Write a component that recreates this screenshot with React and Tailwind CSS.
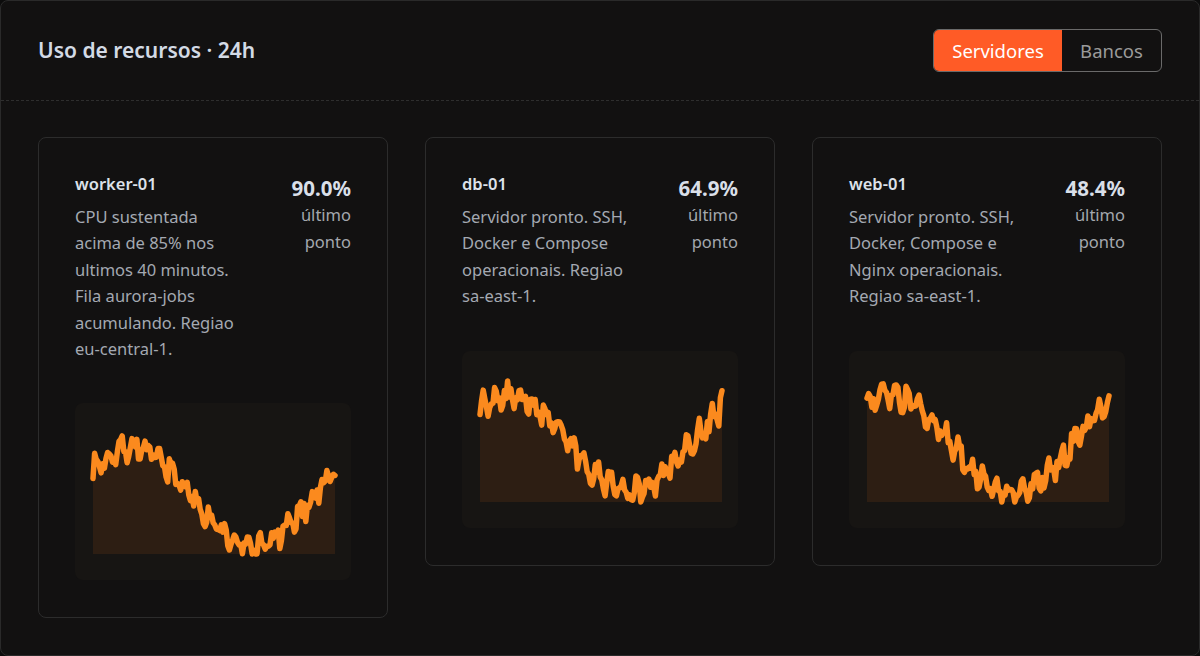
import { useMemo } from 'react';

const FONT = { fontFamily: '"Noto Sans", "Open Sans", sans-serif' };

const servers = [
  {
    name: 'worker-01',
    value: '90.0%',
    text: 'CPU sustentada acima de 85% nos ultimos 40 minutos. Fila aurora-jobs acumulando. Regiao eu-central-1.',
    seed: 7,
    shape: { mid: 0.47, amp: 0.41, period: 1.0, peak: 0.16, tail: 0 },
  },
  {
    name: 'db-01',
    value: '64.9%',
    text: 'Servidor pronto. SSH, Docker e Compose operacionais. Regiao sa-east-1.',
    seed: 19,
    shape: { mid: 0.48, amp: 0.4, period: 1.0, peak: 0.12, tail: 0.14 },
  },
  {
    name: 'web-01',
    value: '48.4%',
    text: 'Servidor pronto. SSH, Docker, Compose e Nginx operacionais. Regiao sa-east-1.',
    seed: 31,
    shape: { mid: 0.48, amp: 0.4, period: 1.0, peak: 0.1, tail: 0.1 },
  },
];

// small seeded rng so every render draws the same series
function rng(seed) {
  let a = seed >>> 0;
  return () => {
    a = (a + 0x6d2b79f5) >>> 0;
    let t = a;
    t = Math.imul(t ^ (t >>> 15), t | 1);
    t ^= t + Math.imul(t ^ (t >>> 7), t | 61);
    return ((t ^ (t >>> 14)) >>> 0) / 4294967296;
  };
}

function buildSeries(seed, { mid, amp, period, peak, tail }, n = 150) {
  const rand = rng(seed);
  const pts = [];
  for (let i = 0; i < n; i++) {
    const t = i / (n - 1);
    let v = mid + amp * Math.cos((2 * Math.PI * (t - peak)) / period);
    v += (rand() - 0.5) * 0.14 + Math.sin(i * 0.8 + rand() * 0.6) * 0.065;
    if (i >= n - 2) v += tail;
    pts.push(Math.max(0, Math.min(1, v)));
  }
  return pts;
}

function Sparkline({ seed, shape }) {
  const W = 242;
  const H = 135;
  const { line, area } = useMemo(() => {
    const data = buildSeries(seed, shape);
    const top = 14;
    const coords = data.map((v, i) => [(i / (data.length - 1)) * W, H - v * (H - top)]);
    const l = coords.map(([x, y], i) => `${i ? 'L' : 'M'}${x.toFixed(1)},${y.toFixed(1)}`).join(' ');
    return { line: l, area: `${l} L${W},${H} L0,${H} Z` };
  }, [seed, shape]);

  return (
    <svg width={W} height={H} viewBox={`0 0 ${W} ${H}`} className="block overflow-visible">
      <path d={area} fill="#f97316" fillOpacity="0.1" />
      <path d={line} fill="none" stroke="#fb8a1e" strokeWidth="5.5" strokeLinejoin="round" strokeLinecap="round" />
    </svg>
  );
}

function ServerCard({ server }) {
  return (
    <div className="w-[350px] rounded-lg border border-[#2c2c2c] bg-[#121111] px-9 pt-9 pb-[37px]">
      <div className="flex justify-between">
        <div className="w-[170px]">
          <div className="text-[16.5px] font-semibold leading-5 text-[#dde2ea]">{server.name}</div>
          <p className="mt-[10px] text-[16.5px] leading-[26.4px] text-[#a4a9b2]">{server.text}</p>
        </div>
        <div className="w-[80px] pt-[2px] text-right">
          <div className="text-[20.5px] font-bold leading-6 text-[#d9dfe8]">{server.value}</div>
          <div className="mt-[1px] text-[16.5px] leading-[27px] text-[#a4a8ae]">último ponto</div>
        </div>
      </div>
      <div className="mt-[41px] rounded-lg bg-[#171513] px-[18px] pt-4 pb-[26px]">
        <Sparkline seed={server.seed} shape={server.shape} />
      </div>
    </div>
  );
}

export default function App() {
  return (
    <div className="h-[656px] w-[1200px] bg-[#0c0c0c]" style={FONT}>
      <div className="h-full rounded-lg border border-[#2a2a2a] bg-[#121111]">
        <header className="flex h-[100px] items-center justify-between border-b border-dashed border-[#2e2e2e] px-[37px]">
          <h1 className="text-[21px] font-semibold text-[#d3dae5]">Uso de recursos · 24h</h1>
          <div className="flex h-[43px] overflow-hidden rounded-md border border-[#6a6a6a] text-[18.5px]">
            <button className="w-[128px] bg-[#ff5b26] text-white">Servidores</button>
            <button className="w-[99px] text-[#9b9b9b]">Bancos</button>
          </div>
        </header>
        <main className="flex items-start gap-[37px] px-[37px] pt-[36px]">
          {servers.map((s) => (
            <ServerCard key={s.name} server={s} />
          ))}
        </main>
      </div>
    </div>
  );
}
